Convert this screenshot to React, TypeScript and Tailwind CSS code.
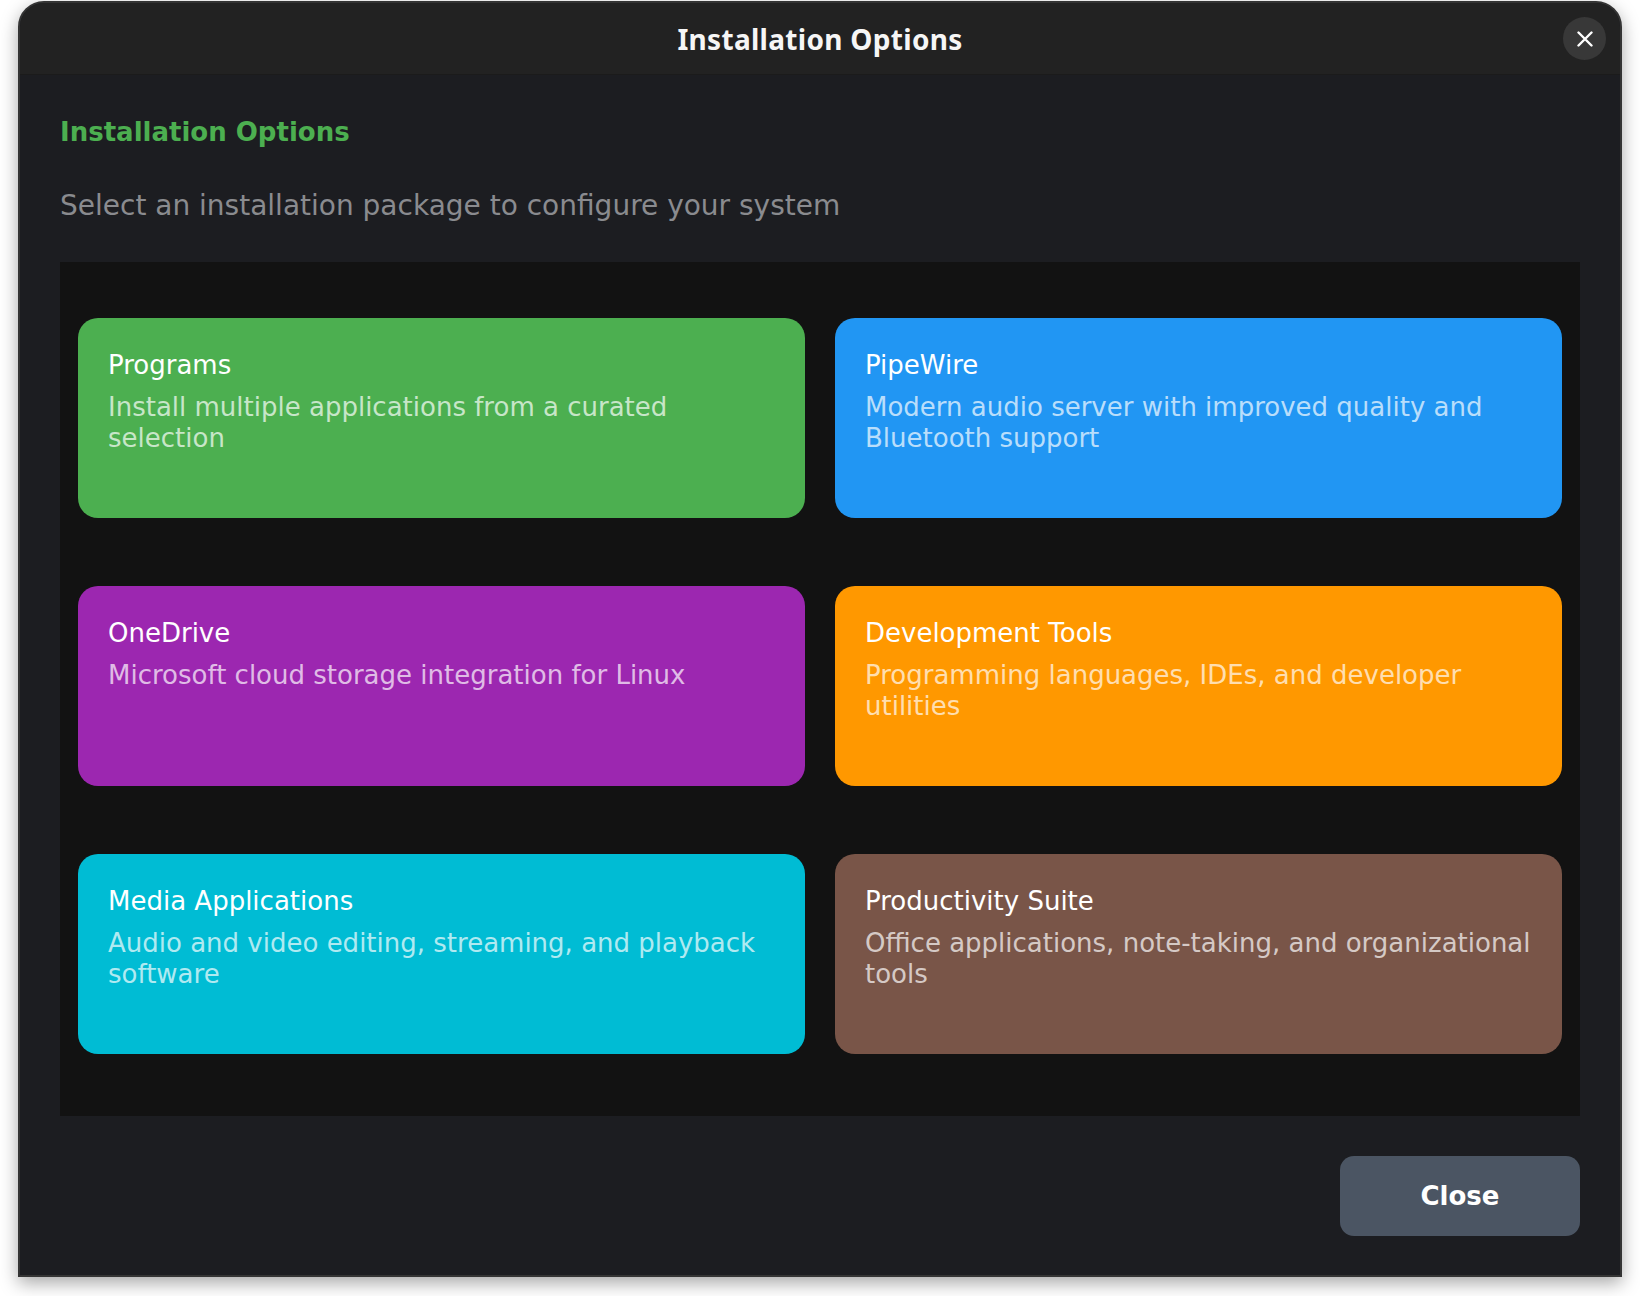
const options = [
  {
    title: "Programs",
    desc: "Install multiple applications from a curated selection",
    color: "bg-[#4caf50]",
  },
  {
    title: "PipeWire",
    desc: "Modern audio server with improved quality and Bluetooth support",
    color: "bg-[#2196f3]",
  },
  {
    title: "OneDrive",
    desc: "Microsoft cloud storage integration for Linux",
    color: "bg-[#9c27b0]",
  },
  {
    title: "Development Tools",
    desc: "Programming languages, IDEs, and developer utilities",
    color: "bg-[#ff9800]",
  },
  {
    title: "Media Applications",
    desc: "Audio and video editing, streaming, and playback software",
    color: "bg-[#00bcd4]",
  },
  {
    title: "Productivity Suite",
    desc: "Office applications, note-taking, and organizational tools",
    color: "bg-[#795548]",
  },
];

function OptionCard({ title, desc, color }: { title: string; desc: string; color: string }) {
  return (
    <button
      type="button"
      className={`${color} flex h-[200px] flex-col items-start rounded-[20px] px-[30px] pt-[32px] text-left`}
    >
      <span className="text-[26px] leading-[31px] text-white">{title}</span>
      <span className="mt-[11px] text-[26px] leading-[31px] text-white/70">{desc}</span>
    </button>
  );
}

export default function App() {
  return (
    <div className="min-h-screen bg-white pl-[18px] pt-[1px] font-['DejaVu_Sans',sans-serif]">
      <div className="flex h-[1276px] w-[1604px] flex-col overflow-hidden rounded-t-[26px] border-2 border-[#343434] bg-[#1c1d21] shadow-[0_6px_18px_rgba(0,0,0,0.35)]">
        {/* title bar */}
        <div className="relative flex h-[72px] shrink-0 items-center justify-center border-b border-[#1b1b1b] bg-[#222222] pt-[1px]">
          <h1 className="font-['Noto_Sans',sans-serif] text-[28px] font-bold tracking-[0.3px] text-[#f6f6f6]">
            Installation Options
          </h1>
          <button
            type="button"
            aria-label="Close"
            className="absolute right-[14px] top-[14px] flex h-[43px] w-[43px] items-center justify-center rounded-full bg-[#383838]"
          >
            <svg width="16" height="16" viewBox="0 0 16 16" fill="none">
              <path d="M1.5 1.5 14.5 14.5M14.5 1.5 1.5 14.5" stroke="#ffffff" strokeWidth="2.4" strokeLinecap="round" />
            </svg>
          </button>
        </div>

        <div className="flex flex-1 flex-col px-[40px] pt-[42px] pb-[39px]">
          <h2 className="text-[26px] leading-[31px] font-bold text-[#4caf50]">Installation Options</h2>
          <p className="mt-[41px] text-[28px] leading-[34px] text-[#8a8b8f]">
            Select an installation package to configure your system
          </p>

          <div className="mt-[39px] grid h-[854px] grid-cols-2 content-start gap-x-[30px] gap-y-[68px] bg-[#121212] px-[18px] pt-[56px] pb-[62px]">
            {options.map((o) => (
              <OptionCard key={o.title} {...o} />
            ))}
          </div>

          <div className="mt-[40px] flex justify-end">
            <button
              type="button"
              className="h-[80px] w-[240px] rounded-[14px] bg-[#4b5563] text-[26px] font-bold text-white"
            >
              Close
            </button>
          </div>
        </div>
      </div>
    </div>
  );
}
